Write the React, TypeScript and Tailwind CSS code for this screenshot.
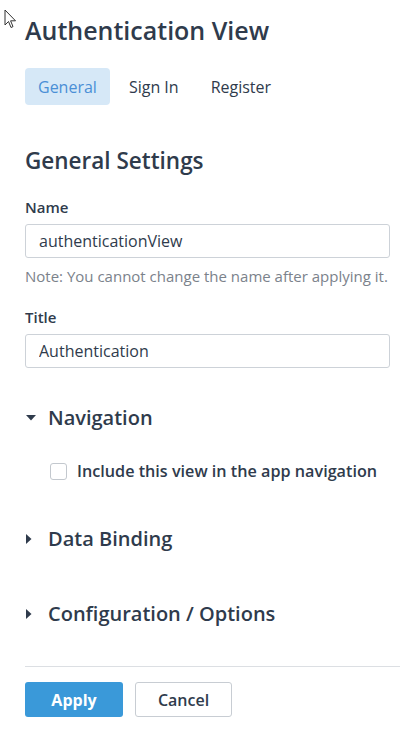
import { ReactNode } from "react";

const font = { fontFamily: '"Open Sans", "Liberation Sans", sans-serif' };

const Cursor = () => (
  <svg
    className="absolute left-[4px] top-[9px]"
    width="14"
    height="21"
    viewBox="0 0 14 21"
  >
    <path
      d="M1 1 L1 16 L4.5 12.5 L7 18.5 L9 17.6 L6.6 11.8 L11.5 11.8 Z"
      fill="white"
      stroke="#333"
      strokeWidth="1"
      strokeLinejoin="round"
    />
  </svg>
);

const Caret = ({ open }: { open?: boolean }) =>
  open ? (
    <svg width="10" height="6" viewBox="0 0 10 6" className="shrink-0">
      <path d="M0 0 L10 0 L5 5.5 Z" fill="#2f3b4c" />
    </svg>
  ) : (
    <svg width="6" height="10" viewBox="0 0 6 10" className="shrink-0">
      <path d="M0 0 L5.5 5 L0 10 Z" fill="#2f3b4c" />
    </svg>
  );

const Section = ({
  title,
  open,
  className,
}: {
  title: string;
  open?: boolean;
  className: string;
}) => (
  <div className={`flex items-center ${className}`}>
    <div className="flex w-[23px] justify-start pl-[1px]">
      <Caret open={open} />
    </div>
    <span className="text-[20px] leading-[28px] font-semibold">{title}</span>
  </div>
);

const Label = ({ children, className }: { children: ReactNode; className: string }) => (
  <div className={`text-[15px] leading-[20px] font-semibold ${className}`}>
    {children}
  </div>
);

const inputClass =
  "mt-[7px] mr-[10px] h-[34px] rounded-[3px] border border-[#cdd2d8] px-[13px] text-[16px] text-[#2f3b4c] outline-none";

export default function App() {
  return (
    <div
      className="relative min-h-[738px] bg-white pt-[14px] pl-[25px] pr-[15px] text-[#2f3b4c]"
      style={font}
    >
      <Cursor />

      <h1 className="text-[25px] leading-[32px] font-semibold">
        Authentication View
      </h1>

      <div className="mt-[22px] flex gap-[6px] text-[16px]">
        <div className="flex h-[37px] items-center rounded-[4px] bg-[#d6e8f7] px-[13px] text-[#4a8fd6]">
          General
        </div>
        <div className="flex h-[37px] items-center px-[13px]">Sign In</div>
        <div className="flex h-[37px] items-center px-[13px]">Register</div>
      </div>

      <h2 className="mt-[41px] text-[22.5px] leading-[30px] font-semibold">
        General Settings
      </h2>

      <Label className="mt-[21px]">Name</Label>
      <input
        type="text"
        className={`block w-[365px] ${inputClass}`}
        defaultValue="authenticationView"
      />
      <p className="mt-[8px] text-[15px] leading-[20px] text-[#7b828b]">
        Note: You cannot change the name after applying it.
      </p>

      <Label className="mt-[21px]">Title</Label>
      <input
        type="text"
        className={`block w-[365px] ${inputClass}`}
        defaultValue="Authentication"
      />

      <Section title="Navigation" open className="mt-[36px]" />

      <label className="mt-[27px] ml-[25px] flex items-center gap-[10px]">
        <span className="h-[17px] w-[17px] rounded-[3px] border border-[#c3c8ce] bg-white" />
        <span className="text-[16.2px] leading-[24px] font-semibold">
          Include this view in the app navigation
        </span>
      </label>

      <Section title="Data Binding" className="mt-[42px]" />
      <Section title="Configuration / Options" className="mt-[47px]" />

      <div className="mt-[38px] h-px bg-[#dcdfe3]" />

      <div className="mt-[15px] flex gap-[12px]">
        <button className="h-[35px] w-[98px] rounded-[3px] bg-[#3a99d9] text-[16px] font-bold text-white">
          Apply
        </button>
        <button className="h-[35px] w-[97px] rounded-[3px] border border-[#c8cdd3] bg-white text-[16px] font-semibold text-[#2f3b4c]">
          Cancel
        </button>
      </div>
    </div>
  );
}
